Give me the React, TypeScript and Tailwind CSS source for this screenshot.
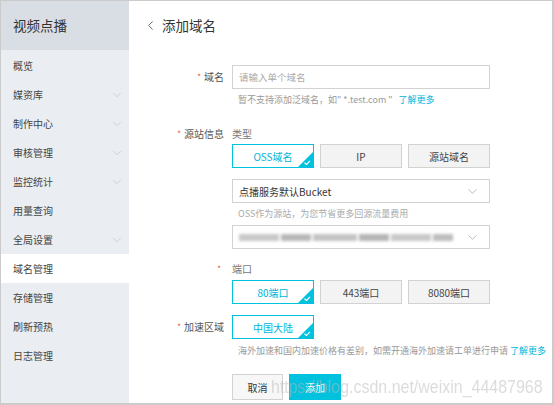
import { ChevronDown, ChevronLeft } from "lucide-react";

const nav = [
  { name: "概览", arrow: false },
  { name: "媒资库", arrow: true },
  { name: "制作中心", arrow: true },
  { name: "审核管理", arrow: true },
  { name: "监控统计", arrow: true },
  { name: "用量查询", arrow: false },
  { name: "全局设置", arrow: true },
  { name: "域名管理", arrow: false, active: true },
  { name: "存储管理", arrow: false },
  { name: "刷新预热", arrow: false },
  { name: "日志管理", arrow: false },
];

function Label({ text, lh = "leading-[24px]" }: { text: string; lh?: string }) {
  return (
    <div className={"w-[103px] shrink-0 text-right text-[10px] text-[#555] pr-[8px] " + lh}>
      <span className="text-[#e5493a] text-[8px] mr-[3px] align-top">*</span>
      {text}
    </div>
  );
}

function Choice({ text, selected }: { text: string; selected?: boolean }) {
  return (
    <div
      className={
        "relative w-[82px] h-[24px] flex items-center justify-center text-[10px] border " +
        (selected
          ? "bg-white border-[#00c1de] text-[#00b4d8]"
          : "bg-[#f3f3f3] border-[#d2d2d2] text-[#444]")
      }
    >
      {text}
      {selected && (
        <svg className="absolute right-0 bottom-0" width="15" height="15" viewBox="0 0 15 15">
          <polygon points="15,0 15,15 0,15" fill="#00c1de" />
          <path d="M6.5 10.8 L8.5 12.5 L12 8.8" stroke="#fff" strokeWidth="1.2" fill="none" />
        </svg>
      )}
    </div>
  );
}

export default function App() {
  return (
    <div
      className="relative w-[554px] h-[405px] flex bg-white border-t border-l border-b-2 border-r-2 border-[#cbcbcb] overflow-hidden"
      style={{ fontFamily: '"Noto Sans CJK SC", "Liberation Sans", sans-serif' }}
    >
      {/* Sidebar */}
      <div className="w-[128px] shrink-0 bg-[#eaedf1] flex flex-col">
        <div className="h-[49px] bg-[#d9dee4] flex items-center pl-[12px] text-[13.5px] text-[#333]">
          视频点播
        </div>
        <div className="pt-[1px]">
          {nav.map((item) => (
            <div
              key={item.name}
              className={
                "h-[29px] flex items-center justify-between pl-[12px] pr-[5px] text-[10px] text-[#444] " +
                (item.active ? "bg-white" : "")
              }
            >
              <span>{item.name}</span>
              {item.arrow && <ChevronDown size={14} strokeWidth={0.9} className="text-[#b5b9bf]" />}
            </div>
          ))}
        </div>
      </div>

      {/* Main */}
      <div className="flex-1">
        <div className="h-[49px] flex items-center pl-[14px] text-[13.5px] text-[#333]">
          <ChevronLeft size={15} strokeWidth={1.3} className="text-[#444] mr-[4px]" />
          添加域名
        </div>

        <div className="pt-[15px]">
          {/* 域名 */}
          <div className="flex">
            <Label text="域名" />
            <div className="w-[258px]">
              <div className="h-[24px] border border-[#d2d2d2] flex items-center pl-[6px] text-[9.5px] text-[#aaa]">
                请输入单个域名
              </div>
              <div className="mt-[3px] pl-[6px] text-[9px] text-[#999] leading-[16px]">
                暂不支持添加泛域名，如" *.test.com "
                <span className="ml-[6px] text-[#00b4d8]">了解更多</span>
              </div>
            </div>
          </div>

          {/* 源站信息 */}
          <div className="flex mt-[19px]">
            <Label text="源站信息" lh="leading-[14px]" />
            <div className="w-[258px]">
              <div className="text-[10px] text-[#777] leading-[14px]">类型</div>
              <div className="flex gap-[6px] mt-[3px]">
                <Choice text="OSS域名" selected />
                <Choice text="IP" />
                <Choice text="源站域名" />
              </div>
              <div className="mt-[11px] h-[24px] border border-[#d2d2d2] flex items-center justify-between pl-[6px] pr-[9px] text-[10px] text-[#333]">
                点播服务默认Bucket
                <ChevronDown size={15} strokeWidth={0.9} className="text-[#888]" />
              </div>
              <div className="pl-[6px] text-[9px] text-[#aaa] leading-[22px]">
                OSS作为源站，为您节省更多回源流量费用
              </div>
              <div className="h-[24px] border border-[#d2d2d2] flex items-center justify-between pl-[6px] pr-[9px]">
                <div className="flex gap-[2px] blur-[1.5px]">
                  <div className="w-[40px] h-[7px] bg-[#c8c8c8]" />
                  <div className="w-[30px] h-[7px] bg-[#b8b8b8]" />
                  <div className="w-[44px] h-[7px] bg-[#c4c4c4]" />
                  <div className="w-[30px] h-[7px] bg-[#b5b5b5]" />
                  <div className="w-[40px] h-[7px] bg-[#c8c8c8]" />
                  <div className="w-[20px] h-[7px] bg-[#bdbdbd]" />
                </div>
                <ChevronDown size={15} strokeWidth={0.9} className="text-[#888]" />
              </div>
            </div>
          </div>

          {/* 端口 */}
          <div className="flex mt-[13px]">
            <div className="w-[103px] shrink-0 text-right pr-[11px] text-[8px] text-[#e5493a] leading-[14px]">*</div>
            <div className="w-[258px]">
              <div className="text-[10px] text-[#777] leading-[14px]">端口</div>
              <div className="flex gap-[6px] mt-[4px]">
                <Choice text="80端口" selected />
                <Choice text="443端口" />
                <Choice text="8080端口" />
              </div>
            </div>
          </div>

          {/* 加速区域 */}
          <div className="flex mt-[11px]">
            <Label text="加速区域" />
            <div className="w-[315px]">
              <Choice text="中国大陆" selected />
              <div className="mt-[2px] pl-[6px] text-[9px] text-[#999] leading-[20px] whitespace-nowrap">
                海外加速和国内加速价格有差别，如需开通海外加速请工单进行申请
                <span className="ml-[2px] text-[#00b4d8]">了解更多</span>
              </div>
            </div>
          </div>

          {/* Buttons */}
          <div className="flex mt-[13px] pl-[103px] gap-[6px]">
            <div className="w-[51px] h-[26px] border border-[#d2d2d2] bg-[#f7f7f7] flex items-center justify-center text-[10px] text-[#333]">
              取消
            </div>
            <div className="w-[52px] h-[26px] bg-[#00c1de] flex items-center justify-center text-[10px] text-white">
              添加
            </div>
          </div>
        </div>
      </div>

      {/* watermark */}
      <div
        className="absolute left-[270px] top-[372px] text-[19px] text-[rgba(185,185,185,0.5)] whitespace-nowrap pointer-events-none origin-left scale-x-[0.84]"
        style={{ fontFamily: '"Liberation Sans", sans-serif' }}
      >
        https://blog.csdn.net/weixin_44487968
      </div>
    </div>
  );
}
